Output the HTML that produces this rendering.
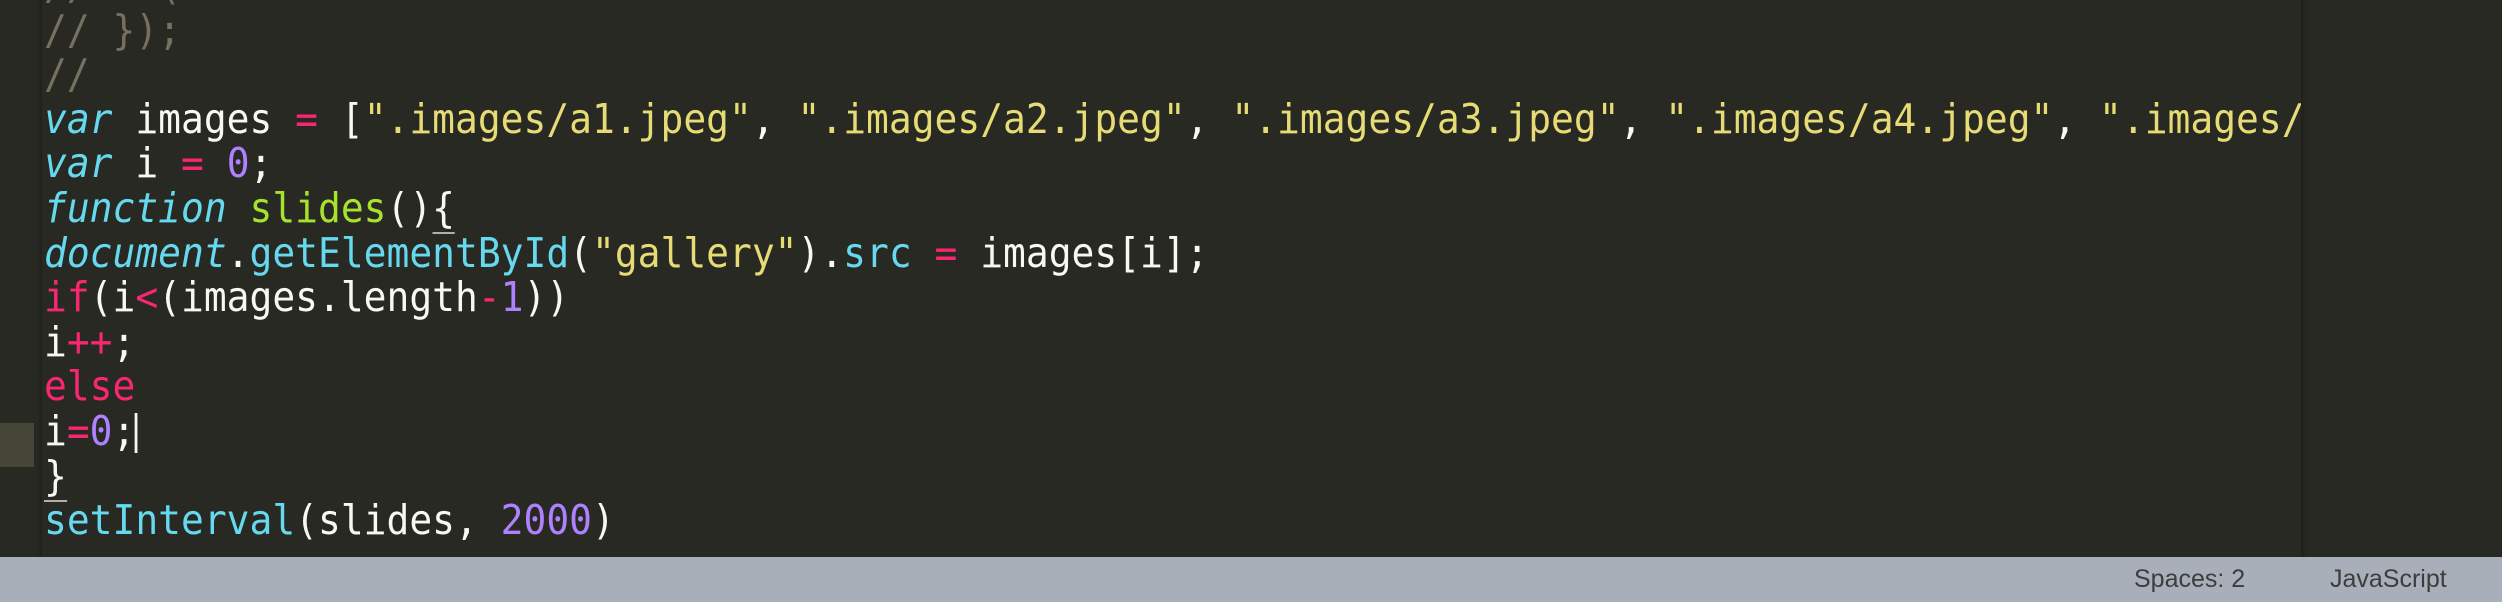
<!DOCTYPE html>
<html><head><meta charset="utf-8"><style>
html,body{margin:0;padding:0;width:2502px;height:602px;overflow:hidden;background:#282923;}
.gut{position:absolute;left:0;top:0;width:42px;height:557px;background:#282923;box-shadow:inset -4px 0 5px -3px #1c1d18;}
.hl{position:absolute;left:0;top:423px;width:34px;height:44px;background:#464638;}
.wrap{position:absolute;left:44px;top:-37px;width:2257px;height:594px;overflow:hidden;}
.code{transform:scaleX(0.925);transform-origin:0 0;width:2440px;font-family:"DejaVu Sans Mono","Liberation Mono",monospace;font-size:41px;line-height:44.6px;color:#f8f8f2;white-space:pre;}
.c{color:#75715e}.k{color:#66d9ef;font-style:italic}.p{color:#f92672}.s{color:#e6db74}.n{color:#ae81ff}.f{color:#a6e22e}.b{color:#66d9ef}
.u{border-bottom:2px solid #b0b0a8}
.cur{display:inline-block;width:3px;height:40px;background:#f8f8f0;vertical-align:-8px;margin-left:-1px}
.mini{position:absolute;left:2301px;top:0;width:201px;height:557px;background:#282923;box-shadow:inset 5px 0 5px -3px #1e1f1a;}
.status{position:absolute;left:0;top:557px;width:2502px;height:45px;background:#a9afb9;font-family:"Liberation Sans",sans-serif;font-size:25px;color:#3d3d3d;}
.status span{position:absolute;top:8px}
</style></head><body>
<div class="gut"></div><div class="hl"></div>
<div class="wrap"><div class="code"><span class="c">//   (</span>
<span class="c">// });</span>
<span class="c">//</span>
<span class="k">var</span> images <span class="p">=</span> [<span class="s">".images/a1.jpeg"</span>, <span class="s">".images/a2.jpeg"</span>, <span class="s">".images/a3.jpeg"</span>, <span class="s">".images/a4.jpeg"</span>, <span class="s">".images/a5.jpeg"</span>];
<span class="k">var</span> i <span class="p">=</span> <span class="n">0</span>;
<span class="k">function</span> <span class="f">slides</span>()<span class="u">{</span>
<span class="k">document</span>.<span class="b">getElementById</span>(<span class="s">"gallery"</span>).<span class="b">src</span> <span class="p">=</span> images[i];
<span class="p">if</span>(i<span class="p">&lt;</span>(images.length<span class="p">-</span><span class="n">1</span>))
i<span class="p">++</span>;
<span class="p">else</span>
i<span class="p">=</span><span class="n">0</span>;<span class="cur"></span>
<span class="u">}</span>
<span class="b">setInterval</span>(slides, <span class="n">2000</span>)</div></div>
<div class="mini"></div>
<div class="status"><span style="left:2134px">Spaces: 2</span><span style="left:2330px">JavaScript</span></div>
</body></html>
